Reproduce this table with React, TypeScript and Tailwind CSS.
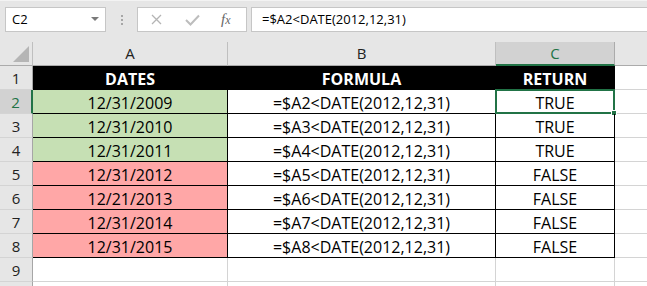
import { Fragment } from "react";

interface Row {
  date: string;
  ret: string;
  fill: string;
}

const rows: Row[] = [
  { date: "12/31/2009", ret: "TRUE", fill: "bg-[#C6E0B4]" },
  { date: "12/31/2010", ret: "TRUE", fill: "bg-[#C6E0B4]" },
  { date: "12/31/2011", ret: "TRUE", fill: "bg-[#C6E0B4]" },
  { date: "12/31/2012", ret: "FALSE", fill: "bg-[#FFA7A7]" },
  { date: "12/21/2013", ret: "FALSE", fill: "bg-[#FFA7A7]" },
  { date: "12/31/2014", ret: "FALSE", fill: "bg-[#FFA7A7]" },
  { date: "12/31/2015", ret: "FALSE", fill: "bg-[#FFA7A7]" },
];

const cell = "h-[24px] border-r border-b text-center text-[16px] leading-[22px] pt-[2px] whitespace-nowrap overflow-hidden";
const rowHead = "h-[24px] border-b border-b-[#D4D4D4] border-r border-r-[#A6A6A6] bg-[#E6E6E6] text-center text-[15px] leading-[22px] pt-[1px] text-[#222]";
const colHead = "h-[24px] border-r border-r-[#BFBFBF] border-b border-b-[#ABABAB] bg-[#E6E6E6] text-center text-[15px] leading-[23px] text-[#222]";

function FormulaBar() {
  return (
    <div className="flex h-[42px] items-start border-t border-[#F3F3F3] pt-[6px] pl-[5px]">
      {/* name box */}
      <div className="flex h-[25px] w-[101px] items-center justify-between border border-[#C6C6C6] bg-white pl-[6px] pr-[6px] text-[13px] text-black">
        <span>C2</span>
        <svg width="8" height="5" viewBox="0 0 8 5">
          <polygon points="0,0 8,0 4,4" fill="#7A7A7A" />
        </svg>
      </div>

      {/* grip dots */}
      <div className="flex h-[25px] w-[31px] flex-col items-center justify-center gap-[2px]">
        <span className="h-[2px] w-[2px] bg-[#A6A6A6]" />
        <span className="h-[2px] w-[2px] bg-[#A6A6A6]" />
        <span className="h-[2px] w-[2px] bg-[#A6A6A6]" />
      </div>

      {/* cancel / enter / insert function */}
      <div className="flex h-[25px] w-[110px] items-center border border-[#C6C6C6] bg-white pl-[13px]">
        <svg width="11" height="11" viewBox="0 0 11 11">
          <path d="M1 1 L10 10 M10 1 L1 10" stroke="#B4B4B4" strokeWidth="1.3" fill="none" />
        </svg>
        <svg className="ml-[23px]" width="15" height="12" viewBox="0 0 15 12">
          <path d="M1 6 L5.5 10.5 L14 1.5" stroke="#BDBDBD" strokeWidth="2" fill="none" />
        </svg>
        <span className="ml-[21px] font-['Liberation_Serif',serif] text-[15px] italic leading-none text-[#666]">
          f<span className="text-[12px]">x</span>
        </span>
      </div>

      {/* formula input */}
      <div className="ml-[4px] flex h-[25px] flex-1 items-center border border-r-0 border-[#C6C6C6] bg-white pl-[10px] text-[13px] text-black">
        =$A2&lt;DATE(2012,12,31)
      </div>
    </div>
  );
}

export default function App() {
  return (
    <div className="h-[286px] w-[647px] overflow-hidden bg-[#E6E6E6] font-['Open_Sans',sans-serif]">
      <FormulaBar />

      <div className="grid grid-cols-[33px_195px_268px_119px_1fr] bg-white">
        {/* column headers */}
        <div className="flex h-[24px] items-end justify-end border-r border-r-[#BFBFBF] border-b border-b-[#ABABAB] bg-[#E6E6E6] pr-[3px] pb-[3px]">
          <svg width="16" height="16" viewBox="0 0 16 16">
            <polygon points="16,0 16,16 0,16" fill="#B5B5B5" />
          </svg>
        </div>
        <div className={colHead}>A</div>
        <div className={colHead}>B</div>
        <div className="h-[24px] border-r border-r-[#ABABAB] border-b-2 border-b-[#217346] bg-[#D2D2D2] text-center text-[15px] leading-[23px] text-[#217346]">
          C
        </div>
        <div className="h-[24px] border-b border-b-[#ABABAB] bg-[#E6E6E6]" />

        {/* row 1: table heading */}
        <div className={rowHead}>1</div>
        <div className={`${cell} border-black bg-black font-bold text-white`}>DATES</div>
        <div className={`${cell} border-black bg-black font-bold text-white`}>FORMULA</div>
        <div className={`${cell} border-black bg-black font-bold text-white`}>RETURN</div>
        <div className="h-[24px] border-b border-[#D4D4D4]" />

        {rows.map((r, i) => {
          const n = i + 2;
          const selected = n === 2;
          return (
            <Fragment key={n}>
              <div
                className={
                  selected
                    ? "h-[24px] border-b border-b-[#D4D4D4] border-r-2 border-r-[#217346] bg-[#D2D2D2] pt-[1px] text-center text-[15px] leading-[22px] text-[#217346]"
                    : rowHead
                }
              >
                {n}
              </div>
              <div className={`${cell} border-black ${r.fill} text-black`}>{r.date}</div>
              <div className={`${cell} border-black text-black`}>=$A{n}&lt;DATE(2012,12,31)</div>
              <div className={`${cell} relative overflow-visible border-black text-black`}>
                {r.ret}
                {selected && (
                  <div className="absolute -top-[1px] -left-[1px] h-[25px] w-[120px] border-2 border-[#217346]">
                    <span className="absolute -right-[4px] -bottom-[4px] h-[6px] w-[6px] border border-white bg-[#217346]" />
                  </div>
                )}
              </div>
              <div className="h-[24px] border-b border-[#D4D4D4]" />
            </Fragment>
          );
        })}

        {/* empty row 9, plus the top edge of the next row */}
        <div className={rowHead}>9</div>
        <div className="h-[24px] border-r border-b border-[#D4D4D4]" />
        <div className="h-[24px] border-r border-b border-[#D4D4D4]" />
        <div className="h-[24px] border-r border-b border-[#D4D4D4]" />
        <div className="h-[24px] border-b border-[#D4D4D4]" />

        <div className="h-[24px] border-r border-r-[#A6A6A6] bg-[#E6E6E6]" />
        <div className="h-[24px] border-r border-[#D4D4D4]" />
        <div className="h-[24px] border-r border-[#D4D4D4]" />
        <div className="h-[24px] border-r border-[#D4D4D4]" />
        <div className="h-[24px]" />
      </div>
    </div>
  );
}
